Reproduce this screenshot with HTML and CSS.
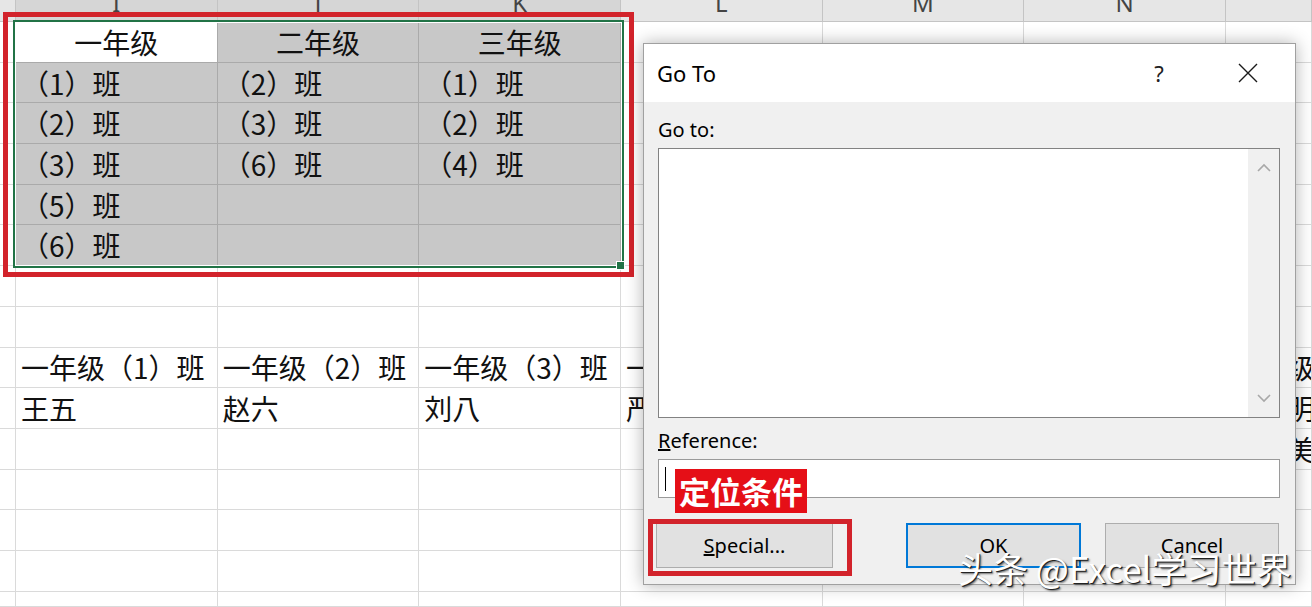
FILE: index.html
```html
<html>
    <head>
        <meta charset="utf-8">
        <link rel="stylesheet" href="styles.css">
    </head>
    <body>
        <div class="sheet">
            <div class="c hd"></div><div class="c hd on">I</div><div class="c hd on">J</div><div class="c hd on">K</div><div class="c hd">L</div><div class="c hd">M</div><div class="c hd">N</div><div class="c hd"></div>

            <div class="c"></div><div class="c sel act mid">一年级</div><div class="c sel mid">二年级</div><div class="c sel mid">三年级</div><div class="c"></div><div class="c"></div><div class="c"></div><div class="c"></div>
            <div class="c"></div><div class="c sel">（1）班</div><div class="c sel">（2）班</div><div class="c sel">（1）班</div><div class="c"></div><div class="c"></div><div class="c"></div><div class="c"></div>
            <div class="c"></div><div class="c sel">（2）班</div><div class="c sel">（3）班</div><div class="c sel">（2）班</div><div class="c"></div><div class="c"></div><div class="c"></div><div class="c"></div>
            <div class="c"></div><div class="c sel">（3）班</div><div class="c sel">（6）班</div><div class="c sel">（4）班</div><div class="c"></div><div class="c"></div><div class="c"></div><div class="c"></div>
            <div class="c"></div><div class="c sel">（5）班</div><div class="c sel"></div><div class="c sel"></div><div class="c"></div><div class="c"></div><div class="c"></div><div class="c"></div>
            <div class="c"></div><div class="c sel">（6）班</div><div class="c sel"></div><div class="c sel"></div><div class="c"></div><div class="c"></div><div class="c"></div><div class="c"></div>
            <div class="c"></div><div class="c"></div><div class="c"></div><div class="c"></div><div class="c"></div><div class="c"></div><div class="c"></div><div class="c"></div>
            <div class="c"></div><div class="c"></div><div class="c"></div><div class="c"></div><div class="c"></div><div class="c"></div><div class="c"></div><div class="c"></div>
            <div class="c"></div><div class="c">一年级（1）班</div><div class="c">一年级（2）班</div><div class="c">一年级（3）班</div><div class="c">一年级（4）班</div><div class="c">一年级（5）班</div><div class="c">一年级（6）班</div><div class="c">二年级（1）班</div>
            <div class="c"></div><div class="c">王五</div><div class="c">赵六</div><div class="c">刘八</div><div class="c">严七</div><div class="c">孙九</div><div class="c">周十</div><div class="c">李小明</div>
            <div class="c"></div><div class="c"></div><div class="c"></div><div class="c"></div><div class="c"></div><div class="c"></div><div class="c"></div><div class="c">王小美</div>
            <div class="c"></div><div class="c"></div><div class="c"></div><div class="c"></div><div class="c"></div><div class="c"></div><div class="c"></div><div class="c"></div>
            <div class="c"></div><div class="c"></div><div class="c"></div><div class="c"></div><div class="c"></div><div class="c"></div><div class="c"></div><div class="c"></div>
            <div class="c"></div><div class="c"></div><div class="c"></div><div class="c"></div><div class="c"></div><div class="c"></div><div class="c"></div><div class="c"></div>
            <div class="c"></div><div class="c"></div><div class="c"></div><div class="c"></div><div class="c"></div><div class="c"></div><div class="c"></div><div class="c"></div>
        </div>

        <!-- selection + annotation over the sheet -->
        <div class="range"></div>
        <div class="handle"></div>
        <div class="mark mark-range"></div>

        <div class="dialog">
            <div class="title">
                <span>Go To</span>
                <span class="help">?</span>
                <span class="close">
                    <svg width="20" height="20" viewBox="0 0 20 20"><path d="M1 1 L19 19 M19 1 L1 19" stroke="#1a1a1a" stroke-width="1.4" fill="none"/></svg>
                </span>
            </div>
            <div class="body">
                <div class="label">Go to:</div>
                <div class="list">
                    <div class="scroll">
                        <svg width="16" height="10" viewBox="0 0 16 10"><path d="M2 8 L8 2 L14 8" stroke="#a8a8a8" stroke-width="1.6" fill="none"/></svg>
                        <svg width="16" height="10" viewBox="0 0 16 10"><path d="M2 2 L8 8 L14 2" stroke="#a8a8a8" stroke-width="1.6" fill="none"/></svg>
                    </div>
                </div>
                <div class="label ref"><u>R</u>eference:</div>
                <div class="input"><span class="caret"></span></div>
                <div class="buttons">
                    <div class="btn special"><u>S</u>pecial...</div>
                    <div class="btn ok">OK</div>
                    <div class="btn cancel">Cancel</div>
                </div>
            </div>
        </div>

        <div class="mark mark-special"></div>
        <div class="tag">定位条件</div>
        <div class="watermark">头条 @Excel学习世界</div>
    </body>
</html>
```

FILE: styles.css
```css
body
{
    margin: 0;
    width: 1312px;
    height: 607px;
    overflow: hidden;
    position: relative;
    background: #fff;
    font-family: "Noto Sans CJK SC", sans-serif;
}

.sheet
{
    display: grid;
    grid-template-columns: 16px repeat(6, 201.67px) 1fr;
    grid-template-rows: 22px repeat(14, 40.7px) 1fr;
    height: 607px;
    font-family: "Noto Sans CJK JP", "Noto Sans CJK SC", sans-serif;
}

.c
{
    border-right: 1px solid #dadada;
    border-bottom: 1px solid #dadada;
    display: flex;
    align-items: center;
    padding-left: 5px;
    font-size: 28px;
    line-height: 1;
    white-space: nowrap;
    overflow: hidden;
    color: #111;
}

.hd
{
    background: #e6e6e6;
    border-color: #c4c4c4;
    justify-content: center;
    align-items: flex-end;
    padding: 0 0 6px 0;
    font-family: "Noto Sans", sans-serif;
    font-size: 24px;
    line-height: 24px;
    color: #444;
}

.hd.on
{
    background: #d6d6d6;
}

.sel
{
    background: #c8c8c8;
    border-color: #aaaaaa;
}

.act
{
    background: #fff;
}

.mid
{
    justify-content: center;
    padding-left: 0;
}

.range
{
    position: absolute;
    left: 13px;
    top: 20px;
    width: 607px;
    height: 244px;
    border: 2px solid #217346;
    box-shadow: inset 0 0 0 1px #fff;
}

.handle
{
    position: absolute;
    left: 616px;
    top: 261px;
    width: 7px;
    height: 7px;
    background: #217346;
    border: 1px solid #fff;
}

.mark
{
    position: absolute;
    border: 5px solid #d2232b;
}

.mark-range
{
    left: 3px;
    top: 12px;
    width: 621px;
    height: 255px;
}

.mark-special
{
    left: 648px;
    top: 519px;
    width: 194px;
    height: 47px;
}

.dialog
{
    position: absolute;
    left: 643px;
    top: 43px;
    width: 651px;
    height: 540px;
    border: 1px solid #a0a0a0;
    background: #f0f0f0;
    box-shadow: 0 0 16px rgba(0,0,0,0.3);
    display: flex;
    flex-direction: column;
    font-family: "Noto Sans", sans-serif;
    color: #000;
}

.title
{
    height: 58px;
    background: #fff;
    display: flex;
    align-items: center;
    padding: 0 24px 0 13px;
    font-size: 22px;
}

.help
{
    margin-left: auto;
    width: 40px;
    text-align: center;
    color: #222;
}

.close
{
    margin-left: 46px;
    width: 46px;
    display: flex;
    justify-content: center;
}

.body
{
    flex: 1;
    padding: 16px 15px 0 14px;
    display: flex;
    flex-direction: column;
}

.label
{
    font-size: 20px;
    line-height: 24px;
}

.label.ref
{
    margin-top: 11px;
}

.list
{
    margin-top: 6px;
    height: 268px;
    border: 1px solid #828282;
    background: #fff;
    display: flex;
    justify-content: flex-end;
}

.scroll
{
    width: 31px;
    background: #f0f0f0;
    display: flex;
    flex-direction: column;
    justify-content: space-between;
    align-items: center;
    padding: 14px 0 14px 0;
}

.input
{
    margin-top: 6px;
    height: 37px;
    border: 1px solid #9a9a9a;
    background: #fff;
    display: flex;
    align-items: center;
}

.caret
{
    margin-left: 6px;
    width: 1px;
    height: 24px;
    background: #000;
}

.buttons
{
    margin-top: 25px;
    display: flex;
}

.btn
{
    height: 43px;
    border: 1px solid #adadad;
    background: #e1e1e1;
    display: flex;
    align-items: center;
    justify-content: center;
    font-size: 20px;
}

.special
{
    margin-left: -2px;
    width: 175px;
}

.ok
{
    margin-left: 73px;
    width: 171px;
    height: 41px;
    border: 2px solid #0078d7;
}

.cancel
{
    margin-left: 24px;
    width: 172px;
}

.tag
{
    position: absolute;
    left: 675px;
    top: 469px;
    width: 132px;
    height: 44px;
    background: #e50f17;
    color: #fff;
    font-size: 31px;
    font-weight: 700;
    line-height: 44px;
    text-align: center;
}

.watermark
{
    position: absolute;
    left: 958px;
    top: 545px;
    font-size: 35px;
    line-height: 46px;
    color: #fff;
    white-space: nowrap;
    text-shadow: 1px 1px 0 #222, 2px 2px 2px rgba(0,0,0,0.55);
}
```
